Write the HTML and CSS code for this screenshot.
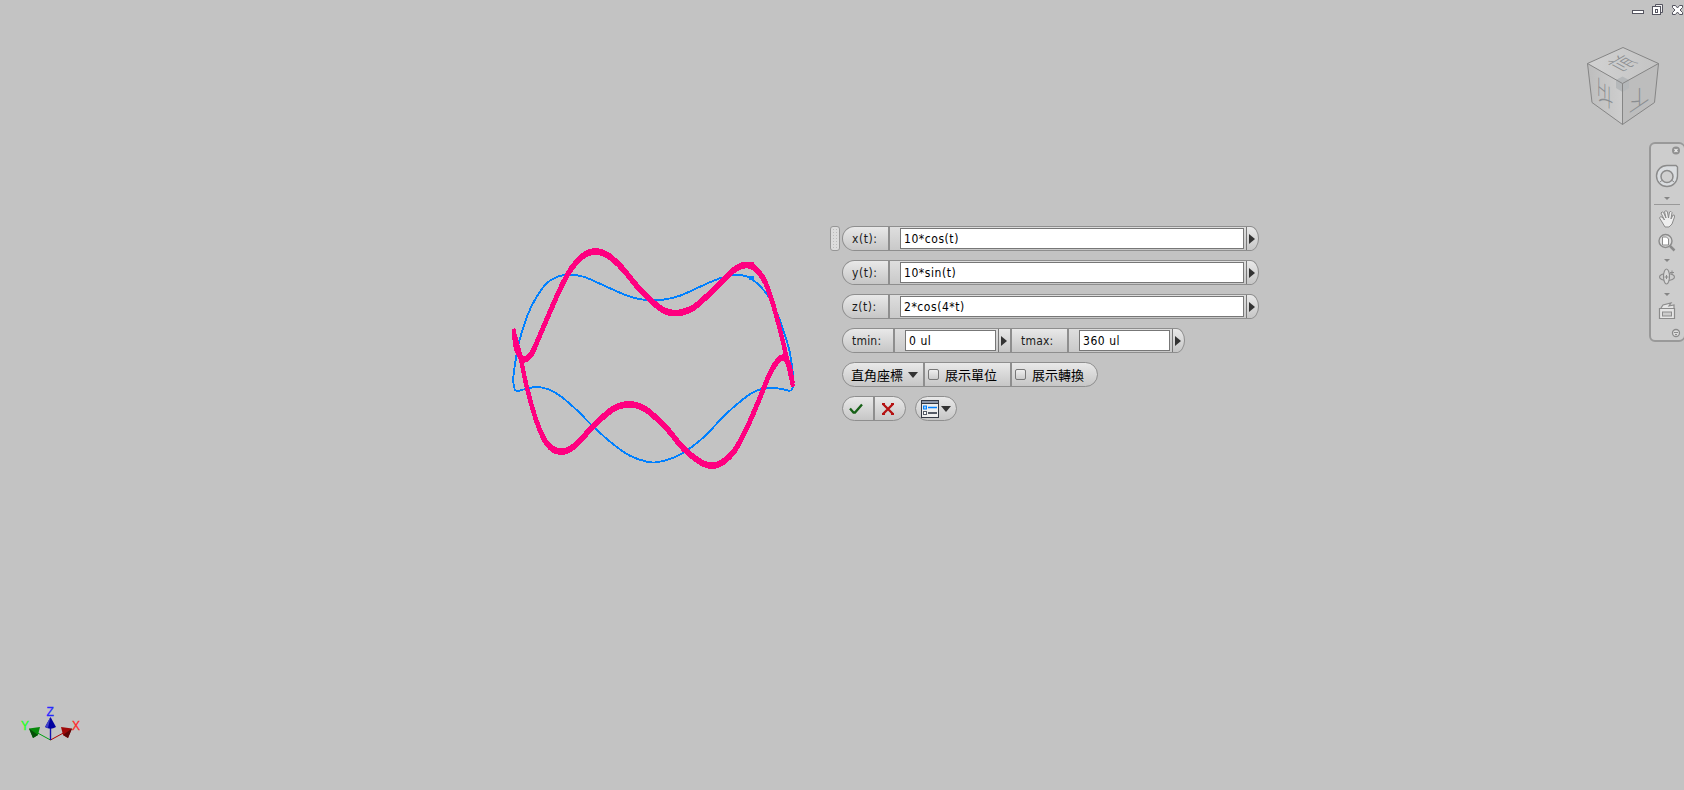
FILE: index.html
```html
<!DOCTYPE html>
<html lang="zh-Hant">
<head>
<meta charset="utf-8">
<title>Equation curve</title>
<link rel="stylesheet" href="styles.css">
</head>
<body>
<main class="viewport">
  <svg class="scene" width="1684" height="790" viewBox="0 0 1684 790">
    <path id="blue" class="curve-blue"/>
    <path id="pink-a" class="curve-pink" transform="translate(0 -1.4)"/>
    <path id="pink-b" class="curve-pink" transform="translate(0 1.4)"/>
    <rect x="748" y="262" width="6" height="5" fill="#ff0080"/>
    <rect x="749" y="276" width="5" height="4" fill="#0080ff"/>
  </svg>

  <svg class="triad" width="70" height="42" viewBox="0 0 70 42">
    <path d="M30.5 33L14 24" stroke="#00a010"/>
    <path d="M30.5 33L47 24" stroke="#b00000"/>
    <path d="M30.5 33V20" stroke="#1010b0" stroke-width="1.4"/>
    <path d="M30.500 10L36 20Q30.500 23.500 25 20Z" fill="#0000a0"/>
    <path d="M30.500 10L28 21L25 20Z" fill="#4040c8"/>
    <path d="M9 21.500L20 20L18 28L13 31Z" fill="#078a0b"/>
    <path d="M9 21.500L18 28L13 31Z" fill="#054f08"/>
    <path d="M52 21.500L41 20L43 28L48 31Z" fill="#a00808"/>
    <path d="M52 21.500L43 28L48 31Z" fill="#5c0505"/>
    <text x="1" y="23" fill="#20ff20" stroke="#20ff20">Y</text>
    <text x="26.500" y="9" fill="#2828ff" stroke="#2828ff">Z</text>
    <text x="52" y="23" fill="#ff2828" stroke="#ff2828">X</text>
  </svg>

  <svg class="window-controls" width="54" height="20" viewBox="0 0 54 20">
    <rect x="2.500" y="10.500" width="11" height="3" fill="#fff" stroke="#555560"/>
    <path d="M25.500 4.500h7v8h-2v2h-8v-8h3z" fill="#eee" stroke="#555560"/>
    <rect x="22.500" y="6.500" width="8" height="8" fill="#fff" stroke="#555560"/>
    <rect x="25.500" y="9.500" width="2" height="3" fill="#fff" stroke="#555560"/>
    <path d="M42.500 5.500h3l2 2.500 2-2.500h3v2l-2.500 2.500 2.500 2.500v2h-3l-2-2.500-2 2.500h-3v-2l2.500-2.500-2.500-2.500z" fill="#fff" stroke="#555560"/>
  </svg>

  <svg class="cube" width="78" height="84" viewBox="0 0 78 84">
    <defs>
      <linearGradient id="face-top" x1="0" x2="1"><stop offset="0" stop-color="#d2d2d2"/><stop offset="1" stop-color="#c4c4c4"/></linearGradient>
      <linearGradient id="face-left" x1="0" x2="1"><stop offset="0" stop-color="#bdbdbd"/><stop offset="1" stop-color="#cecece"/></linearGradient>
    </defs>
    <path d="M39 3.500L74.500 19.500 38.500 39.500 3.500 19.500z" fill="url(#face-top)"/>
    <path d="M3.500 19.500L38.500 39.500V80.500L8 58.500z" fill="url(#face-left)"/>
    <path d="M74.500 19.500L38.500 39.500V80.500L70.500 58.500z" fill="#bdbdbd"/>
    <path d="M32 36l6.500-3.500 6.500 3.500v8l-6.500 4-6.500-4z" fill="#b5b8ba"/>
    <path d="M3.500 19.500L39 3.500 74.500 19.500 70.500 58.500 38.500 80.500 8 58.500zL38.500 39.500 74.500 19.500M38.500 39.500V80.500" fill="none" stroke="#858585"/>
    <text class="cube-label" transform="matrix(-.95 .55 1 .55 38 19)" y="7">前</text>
    <text class="cube-label" transform="matrix(0 -1.35 -.85 -.7 21 50)" y="7">左</text>
    <text class="cube-label" transform="matrix(-1.1 .75 0 -1.15 55 54)" y="7">下</text>
  </svg>

  <nav class="navbar">
    <svg width="34" height="198" viewBox="0 0 34 198" fill="none" stroke="#8b8b8b">
      <circle cx="26" cy="7.500" r="4" fill="#909090" stroke="none"/><path d="M24.500 6l3 3m0-3l-3 3" stroke="#eee" stroke-width="1.100"/>
      <path d="M27.500 24V33A10.500 10.500 0 1 1 17 22.500H26z" fill="#dadde0" stroke-width="1.400"/>
      <circle cx="17" cy="33.500" r="6" fill="#d0d0d0" stroke-width="1.500"/>
      <path d="M10 39l2.500-2m11.500 2l-2.500-2" />
      <path d="M14 54h6l-3 3z" fill="#858585" stroke="none"/>
      <path d="M4 61.500h26" stroke="#999"/>
      <path d="M12 79L9.500 75Q10 73 12 74L14.500 77 11 70Q12 68 13.500 69.500L16 75 14.500 68.500Q16 67 17.300 68.500L18.500 75 19.500 69Q21 67.500 22 69.500L21 76 23 72Q25 71.500 24.500 74L22 81 19 84H15z" fill="#eee"/>
      <circle cx="15.500" cy="98" r="6.500" fill="#ddd" stroke-width="1.400"/><path d="M12.500 94h4l2 2v6h-6z" fill="#fff"/><path d="M20 103l4.500 4.500" stroke-width="2.500"/>
      <path d="M14 116h6l-3 3z" fill="#858585" stroke="none"/>
      <ellipse cx="17" cy="134" rx="7.500" ry="3.500" stroke-width="1.100"/><ellipse cx="16.500" cy="133.500" rx="3" ry="7.500" fill="#d8d8d8" stroke-width="1.100"/><path d="M14.500 134h4m-2-2v4M20 129.500h4m-2-2v4"/>
      <path d="M14 150h6l-3 3z" fill="#858585" stroke="none"/>
      <path d="M9.500 165.500h15v10h-15zM11 165l2-3 8-2-2 3 5-1v3" fill="#e5e5e5" stroke-width="1.200"/><rect x="12.500" y="169" width="9" height="4" fill="#ccc"/>
      <circle cx="26" cy="190" r="3.500" fill="#ddd" stroke-width="1.300"/><path d="M24 189.500h4M25 191.500h2"/>
    </svg>
  </nav>

  <form class="mini">
    <span class="grip"></span>
    <div class="row long"><label class="lab">x(t):</label><span class="cell"><span class="field">10*cos(t)</span></span><span class="more"><i></i></span></div>
    <div class="row long"><label class="lab">y(t):</label><span class="cell"><span class="field">10*sin(t)</span></span><span class="more"><i></i></span></div>
    <div class="row long"><label class="lab">z(t):</label><span class="cell"><span class="field">2*cos(4*t)</span></span><span class="more"><i></i></span></div>
    <div class="row range"><label class="lab tmin">tmin:</label><span class="cell"><span class="field">0 ul</span></span><span class="more"><i></i></span><label class="lab tmax">tmax:</label><span class="cell"><span class="field">360 ul</span></span><span class="more"><i></i></span></div>
    <div class="row options"><span class="choice">直角座標<b class="drop"></b></span><span class="check"><b class="box"></b>展示單位</span><span class="check"><b class="box"></b>展示轉換</span></div>
    <div class="actions">
      <div class="row confirm">
        <span class="ok"><svg width="14" height="12" viewBox="0 0 14 12"><path d="M1 5.500L4.500 9.500 6 9.500 13 1.500" fill="none" stroke="#176117" stroke-width="2.300"/></svg></span>
        <span class="cancel"><svg width="12" height="12" viewBox="0 0 12 12"><path d="M1 1L11 11M11 1L1 11" stroke="#b51212" stroke-width="2.300"/><path d="M0 0h3v2H0zM9 0h3v2H9zM0 10h3v2H0zM9 10h3v2H9z" fill="#b51212"/></svg></span>
      </div>
      <div class="row menu">
        <svg width="18" height="18" viewBox="0 0 18 18"><rect x=".5" y=".5" width="17" height="17" fill="#eee" stroke="#343944"/><path d="M1 1h16v2H1z" fill="#8c96a8"/><path d="M0 3.500h18" stroke="#343944"/><rect x="2.500" y="6" width="3" height="3" fill="#9cf" stroke="#0080ff"/><path d="M7 7.500h9" stroke="#0080ff" stroke-width="1.300"/><rect x="2.500" y="11.500" width="3" height="3" fill="#fff" stroke="#555b66"/><path d="M7 13h9" stroke="#555b66" stroke-width="2"/></svg>
        <b class="drop"></b>
      </div>
    </div>
  </form>
</main>
<script src="curves.js"></script>
</body>
</html>
```
FILE: styles.css
```css
body { margin: 0; }
.viewport { position: relative; width: 1684px; height: 790px; overflow: hidden; background: #c3c3c3; font: 12px "DejaVu Sans Condensed", "DejaVu Sans", "Noto Sans CJK TC", sans-serif; color: #1a1a1a; }
.scene { display: block; }
.curve-blue, .curve-pink { fill: none; shape-rendering: crispEdges; }
.curve-blue { stroke: #0080ff; stroke-width: 1.9; }
.curve-pink { stroke: #ff0080; stroke-width: 3.8; }
.triad { position: absolute; left: 20px; top: 707px; overflow: visible; fill: none; font: 12px "Liberation Sans", sans-serif; }
.triad text { stroke-width: 0.3; }
.window-controls { position: absolute; left: 1630px; top: 0; }
.cube { position: absolute; left: 1584px; top: 44px; }
.cube-label { font: 300 19px "Noto Sans CJK TC", sans-serif; fill: #8a8d90; text-anchor: middle; }
.navbar { position: absolute; left: 1649px; top: 142px; width: 33px; height: 196px; border: 2px solid #999; border-right-width: 1px; border-radius: 6px; background: #cdcdcd; }
.navbar svg { display: block; margin: -1px; }

.mini { position: absolute; left: 842px; top: 226px; display: flex; flex-direction: column; align-items: flex-start; gap: 9px; }
.grip { position: absolute; left: -12px; top: 0; box-sizing: border-box; width: 10px; height: 25px; border: 1px solid #969696; border-radius: 3px; background: radial-gradient(circle, #bbb 0.6px, transparent 1px) 1px 1px / 3px 3px, #dcdcdc; }
.row { display: flex; box-sizing: border-box; height: 25px; overflow: hidden; border: 1px solid #8e8e8e; border-radius: 13px; background: linear-gradient(#e9e9e9, #c6c6c6); line-height: 23px; letter-spacing: 0.55px; white-space: nowrap; }
.long { width: 417px; border-radius: 13px 9px 9px 13px / 13px; }
.range { width: 343px; border-radius: 13px 9px 9px 13px / 13px; }
.lab { box-sizing: border-box; flex: none; width: 47px; padding-left: 9px; padding-top: 1px; border-right: 2px solid #8e8e8e; }
.tmin { width: 52px; letter-spacing: 0.2px; }
.tmax { width: 59px; padding-left: 9px; border-left: 2px solid #8e8e8e; letter-spacing: 0.2px; }
.cell { flex: 1; padding: 1px 2px 1px 10px; background: linear-gradient(#dedede, #c9c9c9); }
.range .cell { flex: none; width: 91px; }
.field { display: block; box-sizing: border-box; height: 21px; padding-left: 3px; border: 1px solid #777; background: #fff; line-height: 21px; color: #000; }
.more { display: flex; flex: none; align-items: center; box-sizing: border-box; width: 12px; padding-left: 2px; border-left: 1px solid #777; }
.more i { border: 5px solid transparent; border-left: 6px solid #333; border-right: 0; }
.options { width: 256px; font: 13px/23px "Noto Sans CJK TC", sans-serif; letter-spacing: 0; color: #000; }
.choice { display: flex; flex: none; align-items: center; box-sizing: border-box; gap: 5px; width: 82px; padding-left: 8px; border-right: 2px solid #8e8e8e; }
.drop { border: 5px solid transparent; border-top: 6px solid #333; border-bottom: 0; }
.check { display: flex; flex: none; align-items: center; box-sizing: border-box; gap: 6px; width: 87px; padding-left: 3px; border-right: 2px solid #8e8e8e; }
.check:last-child { border: 0; }
.box { box-sizing: border-box; width: 11px; height: 11px; border: 1px solid #777; border-radius: 2px; background: linear-gradient(#eee, #ccc); }
.actions { display: flex; gap: 9px; }
.confirm { width: 64px; }
.ok, .cancel { display: flex; align-items: center; }
.ok { box-sizing: border-box; width: 32px; padding-left: 6px; border-right: 2px solid #8e8e8e; }
.cancel { padding-left: 7px; }
.menu { align-items: center; gap: 2px; width: 42px; padding-left: 5px; }
.menu svg { flex: none; }
```
FILE: curves.js
```js
const pink = [[513.5,330],[515.7,346.7],[519.3,355],[524,359.5],[531.7,353.5],[540,335],[550,311.7],[561.7,285.7],[571.7,268],[583.3,255.7],[595,251.5],[608.3,255.7],[621.7,267.7],[638.3,287.7],[652,301.5],[665,311],[678.3,313],[693.3,307.7],[710,293.3],[725,278.3],[736.7,268],[746.7,265],[755,268.3],[765,281.7],[773.3,305],[781.7,336.7],[789,368],[792.7,384],[790,368],[786.5,360],[783,357.5],[778.3,360],[770,373.3],[758.3,401.7],[746.7,428.3],[735,450],[723.3,461.7],[711.7,465.7],[700,461.7],[683.3,448.3],[666.7,428.3],[650,412.5],[640,406.5],[628.3,404.3],[613.3,408.8],[593.3,426],[575,445.7],[560,451.7],[546.7,443.3],[536.7,421.7],[526.7,386.7],[520.7,358.3],[514.5,335]];
const blue = [[514.3,388],[513.3,378.3],[516,358],[520,338.3],[528.3,313.3],[536.7,296.7],[546.7,283.3],[556.7,277],[568.3,274.7],[583.3,276.7],[600,283.7],[616.7,291.3],[633.3,297.7],[650,300.3],[663.3,299.7],[680,295.7],[700,286.7],[720,278.3],[736.7,275],[750,278],[765,291.7],[775,308.3],[783.3,330],[790,353.3],[793.3,378.3],[792.5,388.5],[789.3,390.7],[780,388.7],[766.7,387.7],[753.3,392.3],[740,401.7],[723.3,416.7],[706.7,434.3],[690,448.3],[673.3,457.7],[656.7,462.3],[646.7,461.7],[630,455.7],[613.3,444.3],[593.3,426.7],[576.7,410],[560,395.7],[548.3,389.3],[536.7,387],[526.7,388.7],[516.7,391],[514.3,388]];

// Catmull-Rom spline through the sample points, as cubic segments
function spline(p) {
  let d = `M${p[0]}`;
  for (let i = 0; i < p.length - 1; i++) {
    const a = p[i - 1] || p[i], b = p[i], c = p[i + 1], e = p[i + 2] || c;
    d += `C${b[0] + (c[0] - a[0]) / 6},${b[1] + (c[1] - a[1]) / 6} ${c[0] - (e[0] - b[0]) / 6},${c[1] - (e[1] - b[1]) / 6} ${c}`;
  }
  return d;
}

document.getElementById("blue").setAttribute("d", spline(blue));
for (const id of ["pink-a", "pink-b"]) document.getElementById(id).setAttribute("d", spline(pink));
```
